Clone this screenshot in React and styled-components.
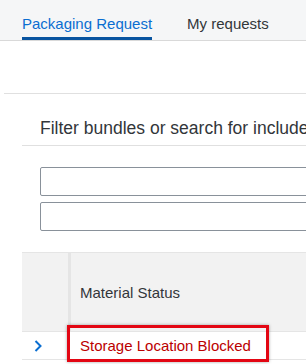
import React from "react";
import styled, { createGlobalStyle } from "styled-components";

const Global = createGlobalStyle`
  body {
    margin: 0;
    font-family: "Liberation Sans", Arial, sans-serif;
    background: #ffffff;
    overflow: hidden;
  }
`;

const Page = styled.div`
  width: 306px;
  height: 364px;
  overflow: hidden;
  background: #ffffff;
`;

const TabBar = styled.div`
  height: 40px;
  background: #f5f6f7;
  border-bottom: 1px solid #d9d9d9;
  display: flex;
  align-items: stretch;
  padding-left: 22px;
  gap: 35px;
`;

const Tab = styled.div`
  display: flex;
  align-items: center;
  font-size: 15px;
  color: ${p => (p.$active ? "#0a6ed1" : "#32363a")};
  border-bottom: 3px solid ${p => (p.$active ? "#0854a0" : "transparent")};
  padding-top: 10px;
  white-space: nowrap;
`;

const Gap = styled.div`
  height: 52px;
`;

const Rule = styled.div`
  height: 1px;
  background: #e0e0e0;
  margin-left: ${p => p.$indent || 0}px;
`;

const Section = styled.div`
  padding-left: 22px;
`;

const Title = styled.div`
  height: 51px;
  box-sizing: border-box;
  display: flex;
  align-items: flex-end;
  padding: 0 0 6px 18px;
  font-size: 17.5px;
  color: #32363a;
  white-space: nowrap;
  overflow: hidden;
`;

const Inputs = styled.div`
  display: flex;
  flex-direction: column;
  gap: 6px;
  padding: 21px 0 0 40px;
`;

const Input = styled.div`
  height: 27px;
  width: 300px;
  border: 1px solid #89919a;
  border-radius: 2px;
  background: #ffffff;
`;

const Table = styled.div`
  margin-top: 21px;
  margin-left: 22px;
  border-top: 1px solid #e5e5e5;
  width: 300px;
`;

const HeaderRow = styled.div`
  display: flex;
  height: 78px;
  background: #f2f2f2;
  border-bottom: 1px solid #e5e5e5;
`;

const Row = styled.div`
  display: flex;
  height: 27px;
  border-bottom: 1px solid #e5e5e5;
`;

const LeadCell = styled.div`
  width: ${p => (p.$header ? 49 : 47)}px;
  box-sizing: border-box;
  flex: none;
  display: flex;
  align-items: center;
  padding-left: 12px;
  border-right: ${p => (p.$header ? "3px solid #e5e5e5" : "1px solid #eeeeee")};
  margin-right: ${p => (p.$header ? 0 : 2)}px;
  background: ${p => (p.$header ? "#f2f2f2" : "#ffffff")};
`;

const HeadText = styled.div`
  display: flex;
  align-items: center;
  padding-left: 9px;
  font-size: 15px;
  color: #32363a;
  white-space: nowrap;
`;

const Cell = styled.div`
  display: flex;
  align-items: center;
  padding-left: 9px;
  font-size: 15px;
  white-space: nowrap;
  position: relative;
`;

const Status = styled.span`
  color: #bb0000;
`;

const Highlight = styled.div`
  position: absolute;
  left: -4px;
  top: -7px;
  width: 196px;
  height: 31px;
  border: 3px solid #e30613;
  box-shadow: 0 0 3px rgba(0, 0, 0, 0.35);
  pointer-events: none;
`;

const Chevron = () => (
  <svg width="8" height="12" viewBox="0 0 8 12">
    <path d="M1.5 1 L6.5 6 L1.5 11" fill="none" stroke="#0a6ed1" strokeWidth="2" />
  </svg>
);

export default function App() {
  return (
    <Page>
      <Global />
      <TabBar>
        <Tab $active>Packaging Request</Tab>
        <Tab>My requests</Tab>
      </TabBar>
      <Gap />
      <Rule $indent={4} />
      <Section>
        <Title>Filter bundles or search for included materials</Title>
        <Rule />
      </Section>
      <Inputs>
        <Input />
        <Input />
      </Inputs>
      <Table>
        <HeaderRow>
          <LeadCell $header />
          <HeadText>Material Status</HeadText>
        </HeaderRow>
        <Row>
          <LeadCell>
            <Chevron />
          </LeadCell>
          <Cell>
            <Status>Storage Location Blocked</Status>
            <Highlight />
          </Cell>
        </Row>
      </Table>
    </Page>
  );
}
